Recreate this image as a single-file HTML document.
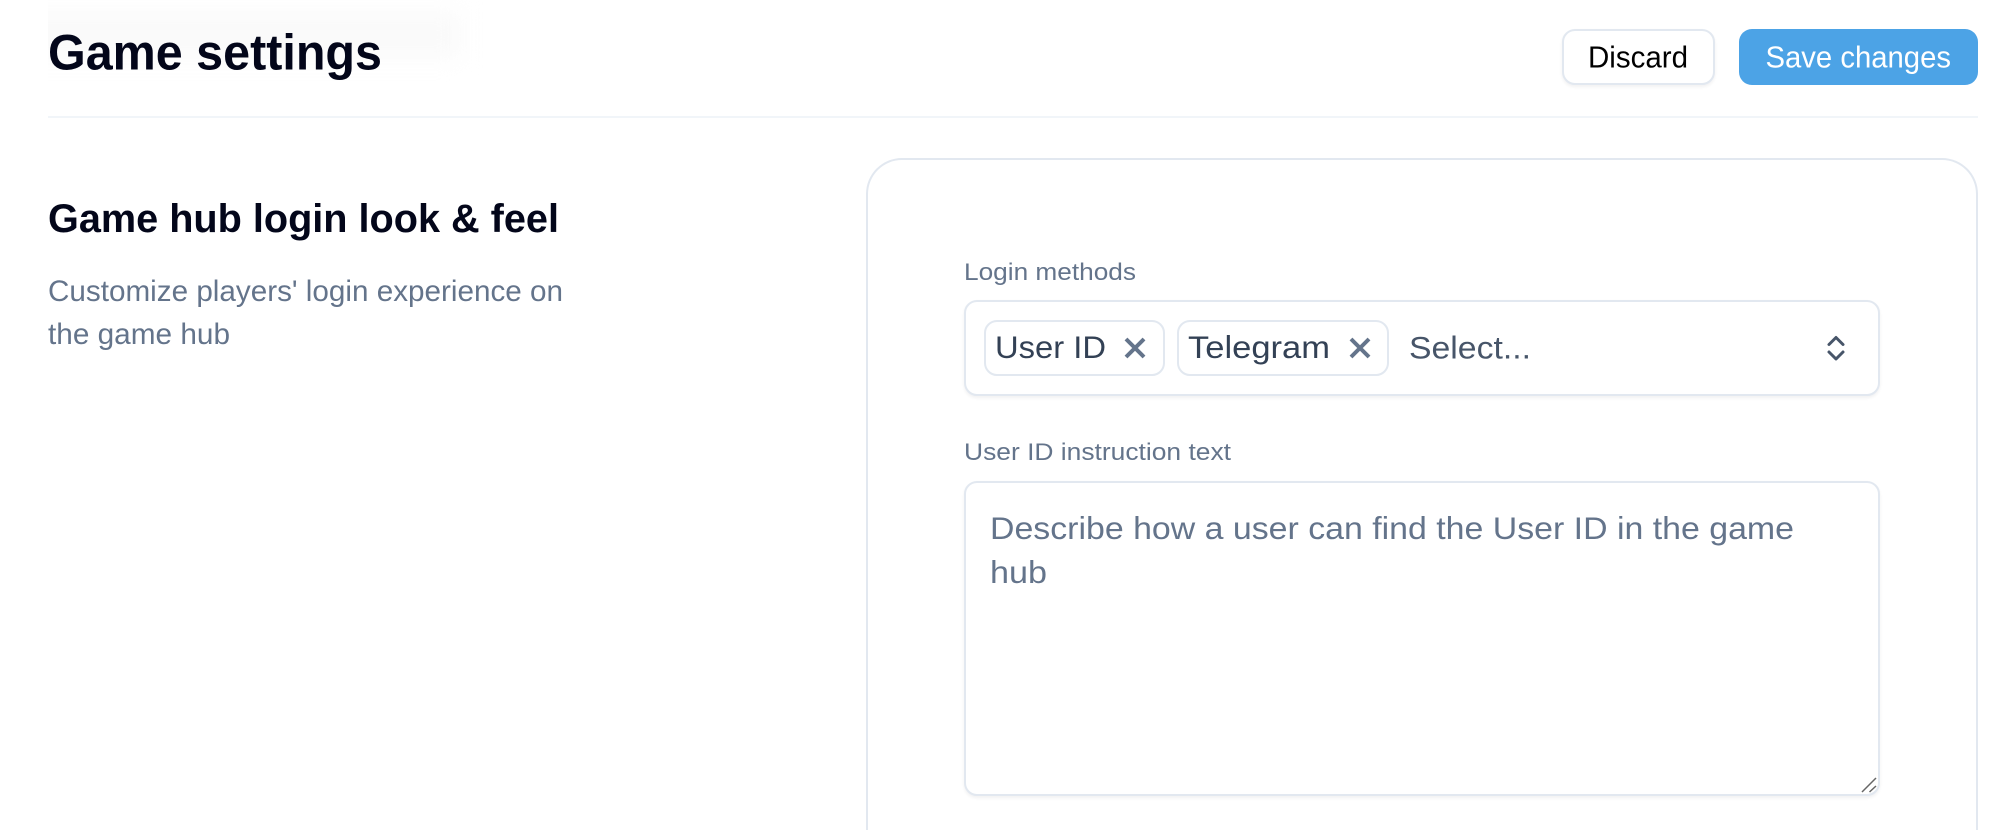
<!DOCTYPE html>
<html lang="en">
<head>
<meta charset="utf-8">
<title>Game settings</title>
<style>
html,body{margin:0;padding:0;width:2012px;height:830px;overflow:hidden;background:#fff}
#page{position:relative;width:2012px;height:830px;overflow:hidden;background:#fff}
.abs{position:absolute;box-sizing:border-box}
.box{background:#fff;border:2px solid #e2e8f0;border-radius:13px;box-shadow:0 2px 3px rgba(15,23,42,.06)}
svg{position:absolute;left:0;top:0}
text{font-family:"Liberation Sans",sans-serif}
</style>
</head>
<body>
<div id="page">
<div class="abs" style="left:48px;top:0;width:440px;height:90px;overflow:hidden">
  <div class="abs" style="left:-30px;top:12px;width:442px;height:46px;background:#fafafa;filter:blur(11px)"></div>
</div>
<div class="abs" style="left:48px;top:116px;width:1930px;height:2px;background:#f1f5f9"></div>

<div class="abs box" style="left:1562px;top:29px;width:153px;height:56px"></div>
<div class="abs" style="left:1739px;top:29px;width:239px;height:56px;background:#4ca3e6;border-radius:13px"></div>

<div class="abs" style="left:866px;top:158px;width:1112px;height:672px;border:2px solid #e2e8f0;border-bottom:0;border-radius:36px 36px 0 0;background:#fff"></div>

<div class="abs box" style="left:964px;top:300px;width:916px;height:96px"></div>
<div class="abs" style="left:984px;top:320px;width:181px;height:56px;border:2px solid #e2e8f0;border-radius:13px;background:#fff"></div>
<div class="abs" style="left:1177px;top:320px;width:212px;height:56px;border:2px solid #e2e8f0;border-radius:13px;background:#fff"></div>
<div class="abs box" style="left:964px;top:481px;width:916px;height:315px"></div>

<svg width="2012" height="830" viewBox="0 0 2012 830" xmlns="http://www.w3.org/2000/svg">
  <text x="48" y="69.500" font-size="50" font-weight="700" fill="#03061a" textLength="334" lengthAdjust="spacingAndGlyphs">Game settings</text>
  <text x="48" y="232" font-size="40" font-weight="700" fill="#03061a" textLength="511" lengthAdjust="spacingAndGlyphs">Game hub login look &amp; feel</text>
  <text x="48" y="301" font-size="29.500" fill="#64748b" textLength="515" lengthAdjust="spacingAndGlyphs">Customize players' login experience on</text>
  <text x="48" y="344" font-size="29.500" fill="#64748b" textLength="182" lengthAdjust="spacingAndGlyphs">the game hub</text>

  <text x="1588" y="67.500" font-size="30.500" fill="#000" textLength="100" lengthAdjust="spacingAndGlyphs">Discard</text>
  <text x="1765.500" y="67.500" font-size="30.500" fill="#fff" textLength="185.500" lengthAdjust="spacingAndGlyphs">Save changes</text>

  <text x="964" y="280" font-size="24" fill="#64748b" textLength="172" lengthAdjust="spacingAndGlyphs">Login methods</text>
  <text x="995" y="358" font-size="31.500" fill="#334155" textLength="111" lengthAdjust="spacingAndGlyphs">User ID</text>
  <text x="1188" y="358" font-size="31.500" fill="#334155" textLength="142" lengthAdjust="spacingAndGlyphs">Telegram</text>
  <text x="1409" y="358.500" font-size="31.500" fill="#475569" textLength="122" lengthAdjust="spacingAndGlyphs">Select...</text>
  <text x="964" y="460" font-size="24" fill="#64748b" textLength="267" lengthAdjust="spacingAndGlyphs">User ID instruction text</text>
  <text x="990" y="539" font-size="31.500" fill="#64748b" textLength="804" lengthAdjust="spacingAndGlyphs">Describe how a user can find the User ID in the game</text>
  <text x="990" y="583" font-size="31.500" fill="#64748b" textLength="57" lengthAdjust="spacingAndGlyphs">hub</text>

  <path d="M1126 339L1144 357M1144 339L1126 357" stroke="#64748b" stroke-width="4" fill="none"/>
  <path d="M1351 339L1369 357M1369 339L1351 357" stroke="#64748b" stroke-width="4" fill="none"/>
  <path d="M1829 344.500L1836 337.500L1843 344.500M1829 352L1836 359L1843 352" stroke="#475569" stroke-width="3" fill="none" stroke-linecap="round" stroke-linejoin="round"/>
  <path d="M1862 792L1876 778M1869.500 792L1876 786" stroke="#666" stroke-width="1.500" fill="none"/>
</svg>
</div>
</body>
</html>
